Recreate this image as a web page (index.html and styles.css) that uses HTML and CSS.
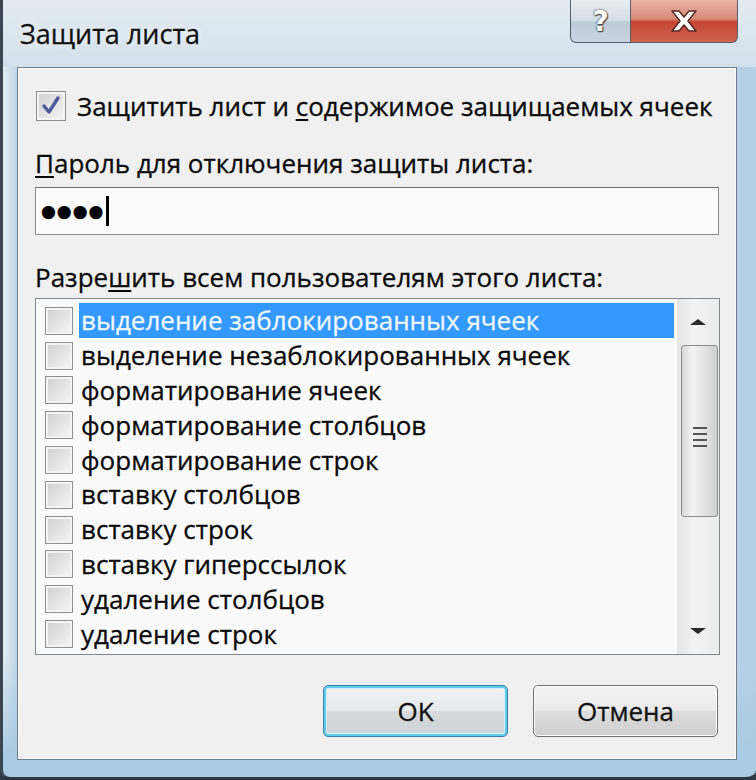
FILE: index.html
```html
<!DOCTYPE html>
<html lang="ru">
<head>
  <meta charset="UTF-8">
  <title>Защита листа</title>
  <link rel="stylesheet" href="styles.css">
</head>
<body>

  <div class="window">
    <div class="titlebar">
      <span class="title">Защита листа</span>
      <div class="caption-buttons">
        <div class="cap-btn help">?</div>
        <div class="cap-btn close">
          <svg width="40" height="26" viewBox="0 0 40 26">
            <path d="M8 3 L15 3 L20 9 L25 3 L32 3 L24 13 L32 23 L25 23 L20 17 L15 23 L8 23 L16 13 Z" fill="#fff" stroke="#5a2a22" stroke-width="1.5" stroke-linejoin="round"/>
          </svg>
        </div>
      </div>
    </div>

    <div class="client">
      <div class="check-row">
        <span class="box">
          <svg width="22" height="22" viewBox="0 0 22 22">
            <path d="M4 11 L9 17 L18 3" fill="none" stroke="#4a5a9a" stroke-width="3.4" stroke-linecap="round" stroke-linejoin="round"/>
          </svg>
        </span>
        <span>Защитить лист и <u>с</u>одержимое защищаемых ячеек</span>
      </div>

      <div class="label"><u>П</u>ароль для отключения защиты листа:</div>
      <div class="input">
        <span class="dots">●●●●</span>
        <span class="caret"></span>
      </div>

      <div class="label second">Разре<u>ш</u>ить всем пользователям этого листа:</div>
      <div class="list">
        <ul class="items">
          <li class="selected"><span class="box"></span><span class="text">выделение заблокированных ячеек</span></li>
          <li><span class="box"></span><span class="text">выделение незаблокированных ячеек</span></li>
          <li><span class="box"></span><span class="text">форматирование ячеек</span></li>
          <li><span class="box"></span><span class="text">форматирование столбцов</span></li>
          <li><span class="box"></span><span class="text">форматирование строк</span></li>
          <li><span class="box"></span><span class="text">вставку столбцов</span></li>
          <li><span class="box"></span><span class="text">вставку строк</span></li>
          <li><span class="box"></span><span class="text">вставку гиперссылок</span></li>
          <li><span class="box"></span><span class="text">удаление столбцов</span></li>
          <li><span class="box"></span><span class="text">удаление строк</span></li>
        </ul>
        <div class="scrollbar">
          <div class="arrow up"></div>
          <div class="thumb">
            <span class="grip"></span>
          </div>
          <div class="track"></div>
          <div class="arrow down"></div>
        </div>
      </div>

      <div class="buttons">
        <button class="btn default">OK</button>
        <button class="btn">Отмена</button>
      </div>
    </div>
  </div>

</body>
</html>
```

FILE: styles.css
```css
body {
  margin: 0;
  background-color: #2f3a44;
  font-family: "Open Sans", "Noto Sans", sans-serif;
  color: #111;
}

.window {
  width: 756px;
  height: 780px;
  box-sizing: border-box;
  padding: 0 19px 17px 14px;
  display: flex;
  flex-direction: column;
  border-left: 3px solid #3b4651;
  border-bottom: 3px solid #2c3944;
  border-radius: 0 0 10px 10px;
  background:
    linear-gradient(180deg, rgba(255, 255, 255, 0) 85%, #a9cbe3 97%),
    linear-gradient(90deg, #e4ecf2 0%, #b9d3e6 2%, #d3e1ec 40%, #dbe6ee 70%, #b3d0e6 100%);
}

.titlebar {
  height: 67px;
  margin-left: -14px;
  margin-right: -19px;
  display: flex;
  align-items: flex-start;
  background: linear-gradient(180deg, #e3ebf1 0%, #d2e0eb 100%);
}

.title {
  margin-top: 14px;
  margin-left: 17px;
  font-size: 27px;
  line-height: 40px;
  color: #101010;
  -webkit-text-stroke: 0.3px #101010;
  text-shadow: 0 0 8px rgba(255, 255, 255, 0.9);
}

.caption-buttons {
  display: flex;
  margin-left: auto;
  margin-right: 18px;
}

.cap-btn {
  height: 43px;
  box-sizing: border-box;
  border: 1px solid #55606c;
  border-top: none;
  display: flex;
  align-items: center;
  justify-content: center;
}

.help {
  width: 61px;
  border-radius: 0 0 0 6px;
  background: linear-gradient(180deg, #e8eef3 0%, #d3dde6 50%, #bccad6 52%, #c9d6e1 100%);
  font-family: "DejaVu Sans", sans-serif;
  font-weight: bold;
  font-size: 28px;
  color: #fff;
  text-shadow: 0 0 1px #333, 0 0 2px #333, 1px 1px 1px #444;
}

.close {
  width: 107px;
  border-left: none;
  border-radius: 0 0 6px 0;
  background: linear-gradient(180deg, #e9b3a6 0%, #d98a78 45%, #c64532 52%, #d0644f 100%);
}

.client {
  flex: 1;
  border: 1px solid #6f7c89;
  box-shadow: inset 0 0 0 1px #fbfbfb;
  background-color: #f0f0f0;
  padding: 0 16px 0 17px;
  display: flex;
  flex-direction: column;
  font-size: 26px;
  color: #0a0a0a;
  -webkit-text-stroke: 0.3px #0a0a0a;
}

.check-row {
  margin-top: 22px;
  height: 32px;
  display: flex;
  align-items: center;
  gap: 11px;
}

.box {
  width: 28px;
  height: 28px;
  box-sizing: border-box;
  border: 1px solid #8e8f8f;
  box-shadow: inset 0 0 0 2px #f4f4f4;
  background: linear-gradient(135deg, #cfcfcf 0%, #e7e7e7 60%, #f6f6f6 100%);
  display: flex;
  align-items: center;
  justify-content: center;
  flex-shrink: 0;
}

.check-row .box {
  width: 30px;
  height: 30px;
  margin-left: 1px;
}

u {
  text-decoration-thickness: 2px;
  text-underline-offset: 3px;
}

.label {
  margin-top: 26px;
  line-height: 30px;
}

.label.second {
  margin-top: 27px;
}

.input {
  margin-top: 9px;
  height: 48px;
  box-sizing: border-box;
  border: 1px solid #8a8a8a;
  border-top-color: #707070;
  background-color: #fbfbfb;
  display: flex;
  align-items: center;
  padding-left: 5px;
  margin-right: 1px;
}

.dots {
  font-family: "DejaVu Sans", sans-serif;
  font-size: 17px;
  letter-spacing: 1px;
  color: #000;
}

.caret {
  width: 3px;
  height: 30px;
  margin-left: 2px;
  background-color: #000;
}

.list {
  margin-top: 6px;
  height: 357px;
  box-sizing: border-box;
  border: 1px solid #828790;
  background-color: #fafafa;
  display: flex;
}

.items {
  list-style: none;
  margin: 0;
  padding: 4px 0 0 9px;
  flex: 1;
}

.items li {
  height: 34.8px;
  display: flex;
  align-items: center;
  gap: 6px;
  line-height: 1;
}

.items li .box {
  margin-top: 1px;
}

.items .text {
  padding: 0 0 0 2px;
  height: 100%;
  display: flex;
  align-items: center;
  flex: 1;
}

.items li.selected .text {
  background-color: #3399ff;
  color: #eef6ff;
  -webkit-text-stroke: 0.3px #eef6ff;
  margin-right: 1px;
}

.scrollbar {
  width: 42px;
  margin-left: 2px;
  display: flex;
  flex-direction: column;
  align-items: center;
  background: linear-gradient(90deg, #e6e6e6 0%, #f2f2f2 40%, #ececec 100%);
}

.arrow {
  height: 46px;
  width: 100%;
  display: flex;
  align-items: center;
  justify-content: center;
}

.arrow::before {
  content: "";
  border-left: 8px solid transparent;
  border-right: 8px solid transparent;
}

.arrow.up::before {
  border-bottom: 6px solid #2b2b2b;
}

.arrow.down::before {
  border-top: 6px solid #2b2b2b;
}

.thumb {
  width: 37px;
  height: 172px;
  margin-left: 3px;
  box-sizing: border-box;
  border: 1px solid #8c8c8c;
  border-radius: 3px;
  background: linear-gradient(90deg, #d8d8d8 0%, #f3f3f3 30%, #e6e6e6 60%, #cfcfcf 100%);
  display: flex;
  align-items: center;
  justify-content: center;
}

.grip {
  width: 14px;
  height: 2px;
  background-color: #555;
  box-shadow: 0 6px 0 #555, 0 12px 0 #555, 0 -6px 0 #555;
  margin-top: 6px;
}

.track {
  flex: 1;
}

.buttons {
  margin-top: 30px;
  display: flex;
  justify-content: flex-end;
  gap: 25px;
  padding-right: 2px;
}

.btn {
  width: 185px;
  height: 52px;
  border: 1px solid #707070;
  border-radius: 5px;
  font-family: inherit;
  font-size: 26px;
  color: #111;
  -webkit-text-stroke: 0.3px #111;
  background: linear-gradient(180deg, #f2f2f2 0%, #ebebeb 49%, #dddddd 51%, #cfcfcf 100%);
  box-shadow: inset 0 0 0 1px #fcfcfc;
}

.btn.default {
  border-color: #3c7fb1;
  box-shadow: inset 0 0 0 2px #5fcdeb, inset 0 0 0 3px #d8f1f8;
  background: linear-gradient(180deg, #f0f3f4 0%, #e6eaec 49%, #d6dadc 51%, #cdd3d6 100%);
}
```
